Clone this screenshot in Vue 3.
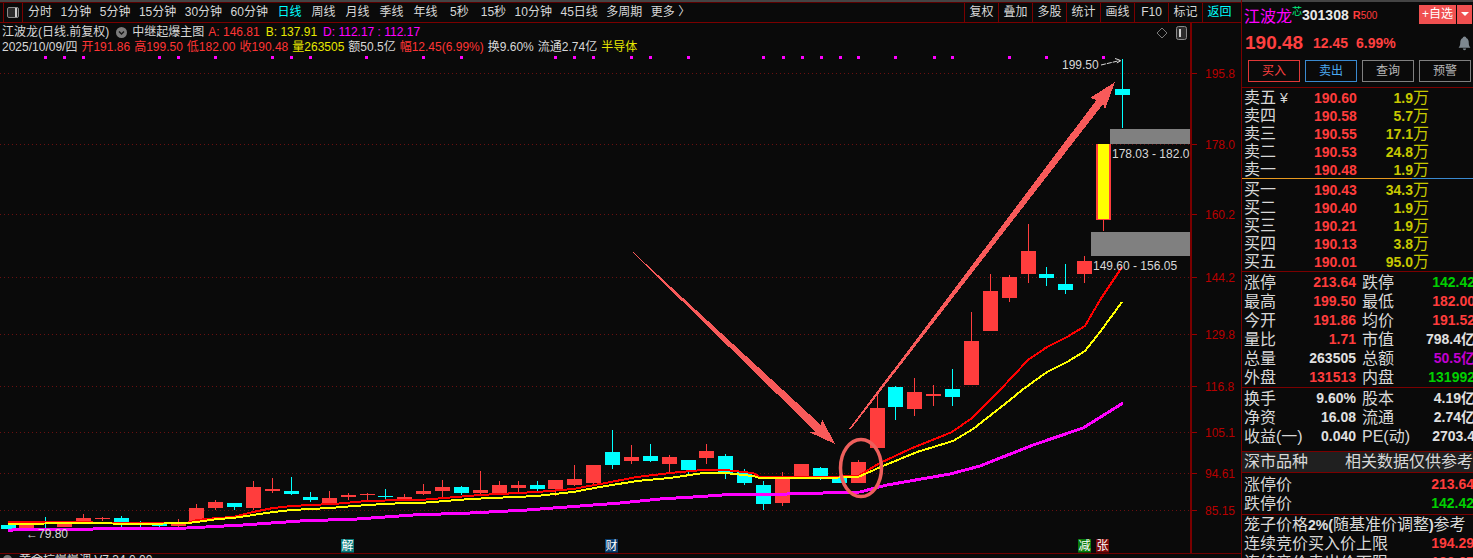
<script setup>
const tabs = [
  { t: '分时' }, { t: '1分钟' }, { t: '5分钟' }, { t: '15分钟' }, { t: '30分钟' }, { t: '60分钟' },
  { t: '日线', on: true, c: 'nudge' }, { t: '周线', c: 'wide' }, { t: '月线', c: 'wide' }, { t: '季线', c: 'wide' }, { t: '年线', c: 'wide' },
  { t: '5秒', c: 'push-a' }, { t: '15秒', c: 'push-b' }, { t: '10分钟' }, { t: '45日线' }, { t: '多周期' }, { t: '更多 〉' }
]
const tools = ['复权', '叠加', '多股', '统计', '画线', 'F10', '标记']
const dots = [44, 63, 82, 158, 177, 214, 271, 290, 309, 365, 422, 460, 554, 573, 592, 630, 649, 687, 762, 782, 801, 820, 839, 857, 894, 933, 951, 1008, 1045, 1102]
const grid = [
  [73, '195.8'], [144, '178.0'], [214, '160.2'], [277, '144.2'], [334, '129.8'],
  [386, '116.8'], [432, '105.1'], [473, '94.61'], [510, '85.15']
]
// x, body top, body bottom, wick top, wick bottom, colour
const candles = [
  [8, 525, 529, 525, 529, 'c'], [26, 523, 528, 523, 528, 'r'], [45, 522, 524, 517, 528, 'c'], [64, 522, 527, 521, 527, 'r'],
  [83, 518, 522, 514, 523, 'r'], [102, 518, 519, 517, 521, 'r'], [121, 518, 525, 516, 527, 'c'], [140, 523, 525, 521, 527, 'c'],
  [159, 524, 526, 524, 527, 'c'], [178, 524, 526, 519, 527, 'r'], [196, 508, 522, 504, 523, 'r'], [215, 502, 508, 500, 510, 'r'],
  [234, 503, 507, 503, 510, 'c'], [253, 487, 508, 481, 510, 'r'], [272, 489, 491, 478, 493, 'r'], [291, 491, 494, 477, 495, 'c'],
  [310, 497, 500, 492, 502, 'c'], [329, 498, 503, 491, 504, 'r'], [348, 495, 497, 493, 500, 'r'], [367, 494, 495, 493, 501, 'r'],
  [385, 496, 497, 489, 500, 'c'], [404, 497, 499, 494, 500, 'r'], [423, 491, 494, 484, 495, 'r'], [442, 487, 491, 480, 497, 'r'],
  [461, 487, 493, 486, 495, 'c'], [480, 490, 493, 471, 496, 'r'], [499, 485, 493, 481, 495, 'r'], [518, 485, 488, 481, 493, 'r'],
  [537, 485, 489, 481, 491, 'c'], [555, 480, 489, 480, 496, 'r'], [574, 479, 485, 465, 486, 'r'], [593, 465, 483, 465, 485, 'r'],
  [612, 452, 465, 430, 469, 'c'], [631, 457, 461, 445, 464, 'r'], [650, 456, 461, 444, 462, 'c'], [669, 457, 464, 455, 473, 'r'],
  [688, 460, 470, 460, 475, 'c'], [706, 451, 458, 444, 464, 'r'], [725, 456, 473, 454, 479, 'c'], [744, 472, 483, 469, 485, 'c'],
  [763, 485, 504, 481, 510, 'c'], [782, 479, 503, 472, 506, 'r'], [801, 464, 479, 464, 479, 'r'], [820, 468, 479, 467, 480, 'c'],
  [839, 477, 483, 477, 483, 'c'], [858, 462, 483, 460, 483, 'r'], [877, 408, 448, 393, 448, 'r'], [895, 387, 407, 386, 420, 'c'],
  [914, 392, 409, 378, 416, 'r'], [933, 394, 396, 385, 406, 'r'], [952, 389, 397, 369, 406, 'c'], [971, 341, 385, 312, 385, 'r'],
  [990, 291, 331, 274, 331, 'r'], [1009, 277, 298, 275, 302, 'r'], [1028, 251, 274, 224, 283, 'r'], [1046, 274, 278, 267, 286, 'c'],
  [1065, 284, 290, 264, 294, 'c'], [1084, 261, 274, 256, 283, 'r'], [1122, 89, 95, 59, 128, 'c']
]
const redLine = '8,522 45,522 141,523 187,523 197,520 217,518 233,517 253,512 273,508 292,506 310,505 333,504 367,501 404,500 420,500 480,495 537,492 573,489 600,484 637,477 670,473 703,470 725,470 753,473 760,477 820,477 858,476 880,463 910,449 952,432 972,418 1000,390 1028,360 1047,347 1067,337 1085,326 1100,300 1122,267'
const yellowLine = '8,524 83,523 141,524 187,523 197,522 217,519 233,518 253,515 273,512 292,510 330,508 367,505 404,503 420,503 470,499 537,496 573,492 600,487 637,481 670,478 703,473 725,473 753,476 760,478 820,478 858,477 883,466 917,452 953,441 973,429 1010,400 1022,390 1047,372 1067,362 1085,351 1100,332 1122,302'
const purpleLine = '8,531 17,529 93,529 187,528 243,525 300,521 357,519 413,515 470,513 527,510 580,506 620,503 660,499 693,497 737,494 787,494 860,492 887,485 950,474 980,466 1033,445 1083,428 1123,403'
const badges = [
  [341, '解', '#0a7a7a'], [605, '财', '#0a3c6c'], [1078, '减', '#0a7a0a'], [1096, '张', '#7a0a0a']
]
const sells = [
  ['卖五', '190.60', '1.9'], ['卖四', '190.58', '5.7'], ['卖三', '190.55', '17.1'], ['卖二', '190.53', '24.8'], ['卖一', '190.48', '1.9']
]
const buys = [
  ['买一', '190.43', '34.3'], ['买二', '190.40', '1.9'], ['买三', '190.21', '1.9'], ['买四', '190.13', '3.8'], ['买五', '190.01', '95.0']
]
const stats = [
  ['涨停', '213.64', 'red', '跌停', '142.42', 'green'],
  ['最高', '199.50', 'red', '最低', '182.00', 'red'],
  ['今开', '191.86', 'red', '均价', '191.52', 'red'],
  ['量比', '1.71', 'red', '市值', '798.4亿', 'white'],
  ['总量', '263505', 'white', '总额', '50.5亿', 'purple'],
  ['外盘', '131513', 'red', '内盘', '131992', 'green']
]
const finance = [
  ['换手', '9.60%', 'white', '股本', '4.19亿', 'white'],
  ['净资', '16.08', 'white', '流通', '2.74亿', 'white'],
  ['收益(一)', '0.040', 'white', 'PE(动)', '2703.4', 'white']
]
</script>

<template>
  <div class="screen">
    <div class="left">
      <div class="toolbar">
        <div class="panel-toggle"><span></span></div>
        <div class="tabs">
          <span v-for="tab in tabs" :key="tab.t" class="tab" :class="[tab.c, { on: tab.on }]">{{ tab.t }}</span>
        </div>
        <div class="tools">
          <span v-for="tool in tools" :key="tool" class="tool">{{ tool }}</span>
          <span class="tool back">返回</span>
        </div>
      </div>
      <div class="chart">
        <svg class="plot" width="1241" height="531" viewBox="0 23 1241 531">
          <g shape-rendering="crispEdges">
            <line v-for="g in grid" :key="g[0]" x1="0" x2="1190" :y1="g[0] + 0.5" :y2="g[0] + 0.5" class="dotted" />
            <rect v-for="d in dots" :key="d" :x="d" y="56" width="3" height="3" fill="#ff00ff" />
            <g v-for="c in candles" :key="c[0]" :fill="c[5] === 'r' ? '#ff3d3d' : '#00ffff'">
              <rect :x="c[0]" :y="c[3]" width="1" :height="c[4] - c[3]" />
              <rect :x="c[0] - 7" :y="c[1]" width="15" :height="Math.max(c[2] - c[1], 1)" />
            </g>
            <rect x="1103" y="220" width="1" height="11" fill="#ff3d3d" />
            <rect x="1096" y="144" width="15" height="76" fill="#ff3d3d" />
            <rect x="1098" y="144" width="11" height="75" fill="#ffff00" />
            <polyline :points="purpleLine" class="ma" stroke="#ff00ff" stroke-width="3" />
            <polyline :points="redLine" class="ma" stroke="#ff0000" stroke-width="2" />
            <polyline :points="yellowLine" class="ma" stroke="#ffff00" stroke-width="2" />
            <rect x="1110" y="129" width="80" height="15" fill="#808080" />
            <rect x="1091" y="232" width="99" height="24" fill="#808080" />
            <polygon fill="#f85a5a" points="633,252 821,425 822,419 835,444 809,432 815.4,431.6 632.6,252.6" />
            <polygon fill="#f85a5a" points="849.4,428.5 1096.6,99.8 1090,98 1115,82 1105,109 1103,104 850.6,429.5" />
            <rect x="1190" y="23" width="2" height="531" fill="#7a0000" />
            <rect x="0" y="553" width="1241" height="1" fill="#700000" />
            <line v-for="g in grid" :key="'t' + g[0]" x1="1192" x2="1197" :y1="g[0] + 0.5" :y2="g[0] + 0.5" stroke="#9a0000" />
          </g>
          <ellipse cx="861" cy="468" rx="20.5" ry="28.5" fill="none" stroke="#ee5f5c" stroke-width="3.5" />
          <text v-for="g in grid" :key="'l' + g[0]" x="1205" :y="g[0] + 5" class="axis">{{ g[1] }}</text>
          <text x="1062" y="69" class="note">199.50</text>
          <path d="M1101 65 L1120 60.5 M1115 58.5 L1121 60.5 L1116 63.5" stroke="#d8d8d8" stroke-width="1" stroke-dasharray="5 1" fill="none" />
          <text x="1112" y="158" class="note">178.03 - 182.0</text>
          <text x="1093" y="270" class="note">149.60 - 156.05</text>
          <text x="26" y="538" class="note">←79.80</text>
          <g v-for="b in badges" :key="b[0]">
            <rect :x="b[0]" y="539" width="13" height="13.5" :fill="b[2]" />
            <text :x="b[0] + 0.5" y="550" class="badge">{{ b[1] }}</text>
          </g>
          <path d="M1162 28 L1167 33 L1162 38 L1157 33 Z" fill="none" stroke="#7a7a7a" />
          <rect x="1176.5" y="26.5" width="10" height="13" rx="2" fill="#2c2c2c" stroke="#8a8a8a" />
          <rect x="1179" y="29" width="2" height="8" fill="#cfcfcf" />
        </svg>
        <div class="info line-one">
          <span>江波龙(日线.前复权)</span>
          <svg class="chev" width="11" height="11" viewBox="0 0 11 11">
            <circle cx="5.5" cy="5.5" r="5.5" fill="#7c7c7c" />
            <path d="M3 4.5 L5.5 7 L8 4.5" stroke="#161616" stroke-width="1.4" fill="none" />
          </svg>
          <span>中继起爆主图</span>
          <span class="i-red">A: 146.81</span>
          <span class="i-yellow">B: 137.91</span>
          <span class="i-purple">D: 112.17 : 112.17</span>
        </div>
        <div class="info line-two">
          <span>2025/10/09/四</span>
          <span class="i-red">开191.86</span>
          <span class="i-red">高199.50</span>
          <span class="i-red">低182.00</span>
          <span class="i-red">收190.48</span>
          <span class="i-yellow">量263505</span>
          <span>额50.5亿</span>
          <span class="i-red">幅12.45(6.99%)</span>
          <span>换9.60%</span>
          <span>流通2.74亿</span>
          <span class="i-yellow">半导体</span>
        </div>
      </div>
      <div class="sub-title">
        <i></i><span>黄金坑慢慢调 V7.34 0.00</span>
      </div>
    </div>

    <aside class="side">
      <div class="name-row">
        <span class="name">江波龙</span>
        <span class="chip">芯</span>
        <span class="code">301308</span>
        <span class="rzero"><b>R</b>500</span>
        <span class="fav">+自选</span>
        <span class="fav-drop"></span>
      </div>
      <div class="price-row">
        <span class="price">190.48</span>
        <span class="delta">12.45</span>
        <span class="pct">6.99%</span>
        <svg class="bell" width="13" height="15" viewBox="0 0 15 18">
          <path d="M7.5 0.5 C9 0.5 9.5 1.5 9.6 2.4 C12 3.4 12.6 5.6 12.6 8 C12.6 11 13.4 12.6 14.6 14 L0.4 14 C1.6 12.6 2.4 11 2.4 8 C2.4 5.6 3 3.4 5.4 2.4 C5.5 1.5 6 0.5 7.5 0.5 Z" fill="#7e8890" />
          <path d="M5.5 15 L9.5 15 C9.3 16.4 8.5 17 7.5 17 C6.5 17 5.7 16.4 5.5 15 Z" fill="#7e8890" />
        </svg>
      </div>
      <div class="actions">
        <span class="act buy">买入</span>
        <span class="act sell">卖出</span>
        <span class="act">查询</span>
        <span class="act">预警</span>
      </div>

      <div class="book sells">
        <div v-for="(r, i) in sells" :key="r[0]" class="order">
          <span class="lab">{{ r[0] }}<em v-if="i === 0" class="yen">¥</em></span>
          <b class="red">{{ r[1] }}</b>
          <b class="vol">{{ r[2] }}</b>
          <span class="wan">万</span>
        </div>
      </div>
      <div class="book buys">
        <div v-for="r in buys" :key="r[0]" class="order">
          <span class="lab">{{ r[0] }}</span>
          <b class="red">{{ r[1] }}</b>
          <b class="vol">{{ r[2] }}</b>
          <span class="wan">万</span>
        </div>
      </div>
      <div class="stats first">
        <div v-for="r in stats" :key="r[0]" class="stat">
          <span class="lab">{{ r[0] }}</span>
          <b :class="r[2]">{{ r[1] }}</b>
          <span class="lab second">{{ r[3] }}</span>
          <b :class="r[5]">{{ r[4] }}</b>
        </div>
      </div>
      <div class="stats fin">
        <div v-for="r in finance" :key="r[0]" class="stat">
          <span class="lab">{{ r[0] }}</span>
          <b :class="r[2]">{{ r[1] }}</b>
          <span class="lab second">{{ r[3] }}</span>
          <b :class="r[5]">{{ r[4] }}</b>
        </div>
      </div>
      <div class="band">
        <span>深市品种</span>
        <span>相关数据仅供参考</span>
      </div>
      <div class="limits">
        <div class="wide-row"><span class="lab">涨停价</span><b class="red">213.64</b></div>
        <div class="wide-row"><span class="lab">跌停价</span><b class="green">142.42</b></div>
      </div>
      <div class="cage">
        <div class="wide-row start"><span class="lab">笼子价格<b class="white">2%(</b>随基准价调整<b class="white">)</b>参考</span></div>
        <div class="wide-row"><span class="lab">连续竞价买入价上限</span><b class="red">194.29</b></div>
        <div class="wide-row"><span class="lab">连续竞价卖出价下限</span><b class="red">186.67</b></div>
      </div>
    </aside>
  </div>
</template>

<style scoped>
.screen {
  width: 1473px;
  height: 558px;
  display: flex;
  overflow: hidden;
  background: #0a0a0a;
  color: #d8d8d8;
  font-family: "Liberation Sans", "Noto Sans CJK SC", sans-serif;
  font-size: 12px;
}
.left {
  width: 1241px;
  height: 558px;
  display: flex;
  flex-direction: column;
  flex: none;
}
.toolbar {
  height: 21px;
  margin-top: 2px;
  box-sizing: border-box;
  display: flex;
  align-items: center;
  border-top: 1px solid #5a0000;
  border-bottom: 1px solid #7a0000;
  box-shadow: 0 -2px 0 #444;
  line-height: 19px;
}
.panel-toggle {
  width: 20px;
  height: 19px;
  margin-left: 3px;
  box-sizing: border-box;
  border-left: 1px solid #7a0000;
  border-right: 1px solid #7a0000;
  display: flex;
  align-items: center;
  justify-content: center;
}
.panel-toggle span {
  width: 12px;
  height: 11px;
  box-sizing: border-box;
  border: 1px solid #8a8a8a;
  border-radius: 2px;
  background: linear-gradient(90deg, #2c2c2c 0 7px, #cfcfcf 7px 9px, #2c2c2c 9px);
}
.tabs {
  display: flex;
  gap: 8.5px;
  padding-left: 5px;
  white-space: nowrap;
}
.tab.on { color: #00ffff; }
.tab.nudge { margin-left: 1px; }
.tab.wide { margin-left: 1.5px; }
.tab.push-a { margin-left: 4px; }
.tab.push-b { margin-left: 3.5px; }
.tools {
  margin-left: auto;
  display: flex;
  height: 19px;
}
.tool {
  width: 34px;
  box-sizing: border-box;
  border-left: 1px solid #7a0000;
  text-align: center;
}
.tool.back {
  width: 39px;
  color: #00ffff;
  padding-right: 5px;
}
.chart {
  position: relative;
  height: 531px;
  flex: none;
}
.plot {
  position: absolute;
  left: 0;
  top: 0;
  display: block;
}
.dotted {
  stroke: #6a1010;
  stroke-dasharray: 1 3;
}
.ma {
  fill: none;
  stroke-linejoin: round;
}
.axis {
  fill: #b80000;
  font-size: 12px;
}
.note {
  fill: #d8d8d8;
  font-size: 12px;
}
.badge {
  fill: #ffffff;
  font-size: 12px;
}
.info {
  position: relative;
  display: flex;
  align-items: center;
  height: 14px;
  line-height: 14px;
  padding-left: 2px;
  white-space: nowrap;
}
.line-one {
  margin-top: 2px;
  gap: 4px;
}
.line-two {
  margin-top: 1px;
  gap: 4px;
}
.chev {
  flex: none;
  margin-left: 3px;
  margin-right: 1px;
}
.line-one .i-yellow { margin-left: 2px; }
.line-one .i-purple { margin-left: 2px; }
.i-red { color: #ff3535; }
.i-yellow { color: #e8e800; }
.i-purple { color: #ff00ff; }
.sub-title {
  height: 4px;
  overflow: hidden;
  display: flex;
  align-items: flex-start;
  gap: 7px;
  padding-left: 3px;
  font-size: 12px;
  line-height: 13px;
}
.sub-title i {
  width: 9px;
  height: 9px;
  border-radius: 50%;
  background: #777;
  margin-top: 1px;
}

.side {
  width: 232px;
  height: 558px;
  flex: none;
  box-sizing: border-box;
  border-left: 1px solid #7a0000;
  overflow: hidden;
  box-shadow: inset 0 2px 0 #444;
}
.name-row {
  height: 26px;
  padding-top: 5px;
  padding-left: 2px;
  display: flex;
  align-items: center;
  white-space: nowrap;
}
.name {
  color: #ff00ff;
  font-size: 16px;
  margin-top: -6px;
}
.chip {
  color: #00f080;
  font-size: 10px;
  align-self: flex-start;
  line-height: 14px;
}
.code {
  color: #e8e8e8;
  font-weight: 700;
  font-size: 14px;
  margin-top: -6px;
}
.rzero {
  color: #ff3c3c;
  font-size: 10px;
  margin-left: 4px;
  margin-top: -6px;
}
.rzero b {
  font-size: 11px;
}
.fav {
  margin-left: auto;
  width: 37px;
  height: 19px;
  line-height: 19px;
  text-align: center;
  background: #f05050;
  color: #fff;
  font-size: 12px;
  align-self: flex-start;
}
.fav-drop {
  width: 15px;
  height: 19px;
  margin-left: 1px;
  margin-right: 1px;
  background: #f05050;
  align-self: flex-start;
  position: relative;
}
.fav-drop::after {
  content: "";
  position: absolute;
  left: 4px;
  top: 7px;
  border: 4px solid transparent;
  border-top: 4px solid #fff;
}
.price-row {
  height: 24px;
  padding-left: 3px;
  display: flex;
  align-items: center;
  color: #ff4040;
  white-space: nowrap;
}
.price {
  font-size: 19px;
  font-weight: 700;
  width: 68px;
}
.delta {
  font-size: 14px;
  font-weight: 700;
  width: 43px;
}
.pct {
  font-size: 14px;
  font-weight: 700;
}
.bell {
  margin-left: auto;
  margin-right: 2px;
}
.actions {
  display: flex;
  gap: 5px;
  padding-left: 6px;
  margin-top: 5px;
  height: 28px;
  box-sizing: border-box;
}
.act {
  width: 52px;
  height: 22px;
  box-sizing: border-box;
  border: 1px solid #808080;
  text-align: center;
  line-height: 20px;
  font-size: 12px;
  color: #b8b8b8;
}
.act.buy { border-color: #e03838; color: #ff4040; }
.act.sell { border-color: #3a8ad0; color: #4aa8f0; }
.book.sells {
  position: relative;
  height: 91px;
  padding-top: 1px;
  box-sizing: border-box;
  box-shadow: 0 -1px 0 #7a0000;
  border-bottom: 1px solid #e89a20;
  border-image: linear-gradient(90deg, #e89a20 0 170px, #3a8ad0 170px) 1;
}
.book.buys {
  height: 93px;
  padding-top: 2px;
  box-sizing: border-box;
  border-bottom: 1px solid #7a0000;
}
.order {
  display: grid;
  grid-template-columns: 70px 42px 57px 16px;
  height: 18px;
  line-height: 18px;
  padding-left: 2px;
  white-space: nowrap;
}
.lab {
  font-size: 16px;
  color: #d8d8d8;
  white-space: nowrap;
}
b {
  font-size: 14px;
  font-weight: 700;
  text-align: right;
}
.yen {
  font-style: normal;
  margin-left: 4px;
  font-size: 14px;
}
.vol { color: #c8c800; }
.wan {
  color: #c8c800;
  font-size: 16px;
}
.red { color: #ff3c3c; }
.green { color: #00d000; }
.white { color: #e0e0e0; }
.purple { color: #c000d0; }
.stats {
  box-sizing: border-box;
  border-bottom: 1px solid #7a0000;
}
.stats.first {
  height: 116px;
  padding-top: 1px;
}
.stats.fin {
  height: 64px;
  padding-top: 1px;
}
.stat {
  display: grid;
  grid-template-columns: 64px 48px 6px 36px 77px;
  height: 19px;
  line-height: 19px;
  padding-left: 2px;
  white-space: nowrap;
}
.stat .second { grid-column: 4; }
.band {
  height: 21px;
  box-sizing: border-box;
  border-bottom: 1px solid #7a0000;
  background: #202020;
  display: flex;
  justify-content: space-between;
  padding-left: 2px;
  font-size: 16px;
  line-height: 20px;
  white-space: nowrap;
}
.limits {
  height: 42px;
  box-sizing: border-box;
  padding-top: 2px;
  border-bottom: 1px solid #7a0000;
}
.wide-row {
  width: 232px;
  height: 19px;
  line-height: 19px;
  padding-left: 2px;
  box-sizing: border-box;
  display: flex;
  justify-content: space-between;
  white-space: nowrap;
}
.wide-row.start { justify-content: flex-start; }
</style>

<style>
html, body {
  margin: 0;
  background: #0a0a0a;
  overflow: hidden;
}
</style>
